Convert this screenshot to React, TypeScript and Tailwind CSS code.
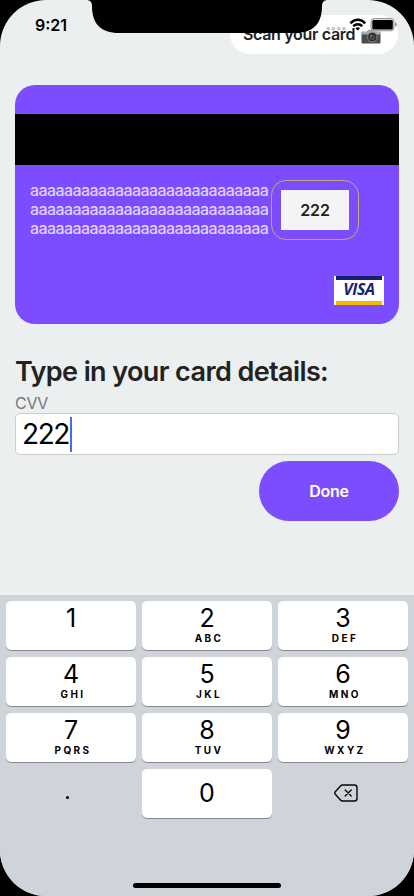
import React from "react";

const keys: [string, string][] = [
  ["1", ""], ["2", "ABC"], ["3", "DEF"],
  ["4", "GHI"], ["5", "JKL"], ["6", "MNO"],
  ["7", "PQRS"], ["8", "TUV"], ["9", "WXYZ"],
];

function Key({ digit, letters }: { digit: string; letters: string }) {
  return (
    <button className="flex h-[49px] flex-col items-center rounded-[5px] bg-white pt-[4px] text-black shadow-[0_1px_0_#888a8d]">
      <span className="text-[25px] leading-[27px]">{digit}</span>
      <span className="pl-[4px] text-[10px] leading-[12px] font-bold tracking-[2.4px]">{letters}</span>
    </button>
  );
}

function StatusBar() {
  return (
    <div className="absolute inset-x-0 top-0 h-[50px]">
      <svg className="absolute inset-0" width="414" height="50" viewBox="0 0 414 50">
        <path d="M86 0C90 0 92 2 92 6C92 24 101 33 119 33H295C313 33 322 24 322 6C322 2 324 0 328 0Z" fill="#000" />
        <g fill="#c6c8c8">
          <rect x="326.500" y="27" width="3.500" height="3.500" rx="1" />
          <rect x="331.700" y="27" width="3.500" height="3.500" rx="1" />
          <rect x="336.900" y="27" width="3.500" height="3.500" rx="1" />
          <rect x="342.100" y="27" width="3.500" height="3.500" rx="1" />
        </g>
        <g fill="none" stroke="#000" strokeWidth="2.500">
          <path d="M350.400 23.300C354.600 18.700 361 18.700 365.200 23.300" />
          <path d="M353.300 26.200C356 23.500 359.600 23.500 362.300 26.200" />
        </g>
        <path d="M355.500 28.200C357 27 358.600 27 360.100 28.200L357.800 30.600Z" fill="#000" />
        <rect x="371" y="18.500" width="23" height="12.300" rx="3.200" fill="#ddd" stroke="#929494" />
        <rect x="372.300" y="20" width="20.500" height="9.400" rx="1.500" fill="#000" />
        <path d="M395.200 22.300C397.500 23 397.500 26 395.200 26.700Z" fill="#929494" />
      </svg>
      <span className="absolute left-[35px] top-[15px] text-[16px] leading-[20px] font-semibold text-black">9:21</span>
    </div>
  );
}

function Camera() {
  return (
    <svg width="20" height="15" viewBox="0 0 20 15">
      <path d="M1 2.500H5.500L7.500 .7H12.500L14.500 2.500H19V5H1Z" fill="#a4a6a6" />
      <rect x=".5" y="3" width="19" height="11.500" rx="1" fill="#4b4c4c" />
      <rect x=".5" y="3" width="19" height="2.500" fill="#aaabaa" />
      <rect x="16.300" y="3.500" width="1.600" height="1.500" fill="#e2c93f" />
      <circle cx="11.300" cy="8.200" r="5.300" fill="#777a7b" />
      <circle cx="11.300" cy="8.200" r="4.100" fill="#292c2f" />
      <circle cx="11.300" cy="8.200" r="2.500" fill="#59616a" />
      <circle cx="11.300" cy="8.200" r="1.400" fill="#252b33" />
      <circle cx="10.200" cy="7" r=".7" fill="#b6bfc7" />
    </svg>
  );
}

export default function App() {
  return (
    <div className="h-[896px] w-[414px] bg-black font-[Inter,sans-serif]">
      <div className="relative flex h-full flex-col overflow-hidden rounded-[46px] bg-[#ebeff0]">
        <header className="flex justify-end pr-4 pt-[15px]">
          <button className="flex h-[39px] w-[168px] items-center rounded-full bg-white pb-px pl-[13px] text-[#222]">
            <span className="w-[114px] whitespace-nowrap text-left text-[16px] leading-[20px] font-semibold tracking-[-0.32px]">Scan your card</span>
            <span className="ml-[4px] mt-[4px]"><Camera /></span>
          </button>
        </header>

        <section className="mx-[15px] mt-[31px] flex h-[239px] flex-col overflow-hidden rounded-[20px] bg-[#7c4dff]">
          <div className="mt-[29px] h-[51px] shrink-0 bg-black" />
          <div className="mt-[15px] flex items-start pl-[15px]">
            <p className="mt-px w-[241px] text-[16px] leading-[19px] font-medium tracking-[-0.58px] text-[#dfd2ff]">
              {[0, 1, 2].map((line) => (
                <span key={line} className="block whitespace-nowrap">aaaaaaaaaaaaaaaaaaaaaaaaaaaa</span>
              ))}
            </p>
            <div className="flex h-[60px] w-[88px] items-center justify-center rounded-[15px] border-[1.5px] border-[#c0ac76]">
              <span className="flex h-10 w-[68px] items-center justify-center bg-[#f4f4f4] text-[16px] font-semibold tracking-[-0.2px] text-[#222]">222</span>
            </div>
          </div>
          <div className="mr-[15px] mt-auto mb-[19px] flex h-[29px] w-[50px] flex-col self-end bg-white px-[2px]">
            <span className="h-1 shrink-0 bg-[#1a1f71]" />
            <span className="flex flex-1 items-center justify-center pb-[3px] font-['Open_Sans',sans-serif] text-[16px] leading-none font-bold italic tracking-[-0.4px] text-[#1a1f71]">VISA</span>
            <span className="h-1 shrink-0 bg-[#f7b600]" />
          </div>
        </section>

        <main className="flex flex-col px-[15px] pt-[31px]">
          <h1 className="whitespace-nowrap text-[27px] leading-[34px] font-semibold tracking-[-0.6px] text-[#222]">Type in your card details:</h1>
          <label className="mt-[5px] text-[16px] leading-[19px] tracking-[-0.3px] text-[#777]">CVV</label>
          <div className="flex h-[42px] items-center rounded-[5px] border border-[#ccc] bg-white pl-[6px]">
            <span className="w-[48px] whitespace-nowrap text-[28px] leading-[34px] tracking-[-1.4px] text-black">222</span>
            <span className="h-[35px] w-[2px] bg-[#426eee]" />
          </div>
          <button className="mt-[6px] h-[60px] w-[140px] self-end rounded-full bg-[#7c4dff] text-[16px] font-semibold tracking-[-0.2px] text-white">Done</button>
        </main>

        <section className="mt-auto h-[301px] bg-[#cfd3da] px-[6px] pt-[6px]">
          <div className="grid grid-cols-3 gap-x-[6px] gap-y-[7px]">
            {keys.map(([digit, letters]) => (
              <Key key={digit} digit={digit} letters={letters} />
            ))}
            <button className="flex h-[49px] items-center justify-center pr-[7px]">
              <span className="mt-[7px] h-[3px] w-[3px] rounded-full bg-black" />
            </button>
            <button className="flex h-[49px] items-center justify-center rounded-[5px] bg-white pb-px text-[25px] leading-none text-black shadow-[0_1px_0_#888a8d]">0</button>
            <button className="flex h-[49px] items-center justify-center pb-[2px] pl-[5px]">
              <svg width="24" height="18" viewBox="0 0 24 18" fill="none" stroke="#080808" strokeWidth="1.400" strokeLinecap="round" strokeLinejoin="round">
                <path d="M8.500 1H20.500Q23 1 23 3.500V14.500Q23 17 20.500 17H8.500Q7.300 17 6.500 16L1.300 10.300Q.3 9 1.300 7.700L6.500 2Q7.300 1 8.500 1Z" />
                <path d="M11.200 6L17.200 12M17.200 6L11.200 12" />
              </svg>
            </button>
          </div>
          <div className="mx-auto mt-[65px] h-[5px] w-[148px] rounded-full bg-black" />
        </section>
        <StatusBar />
      </div>
    </div>
  );
}
